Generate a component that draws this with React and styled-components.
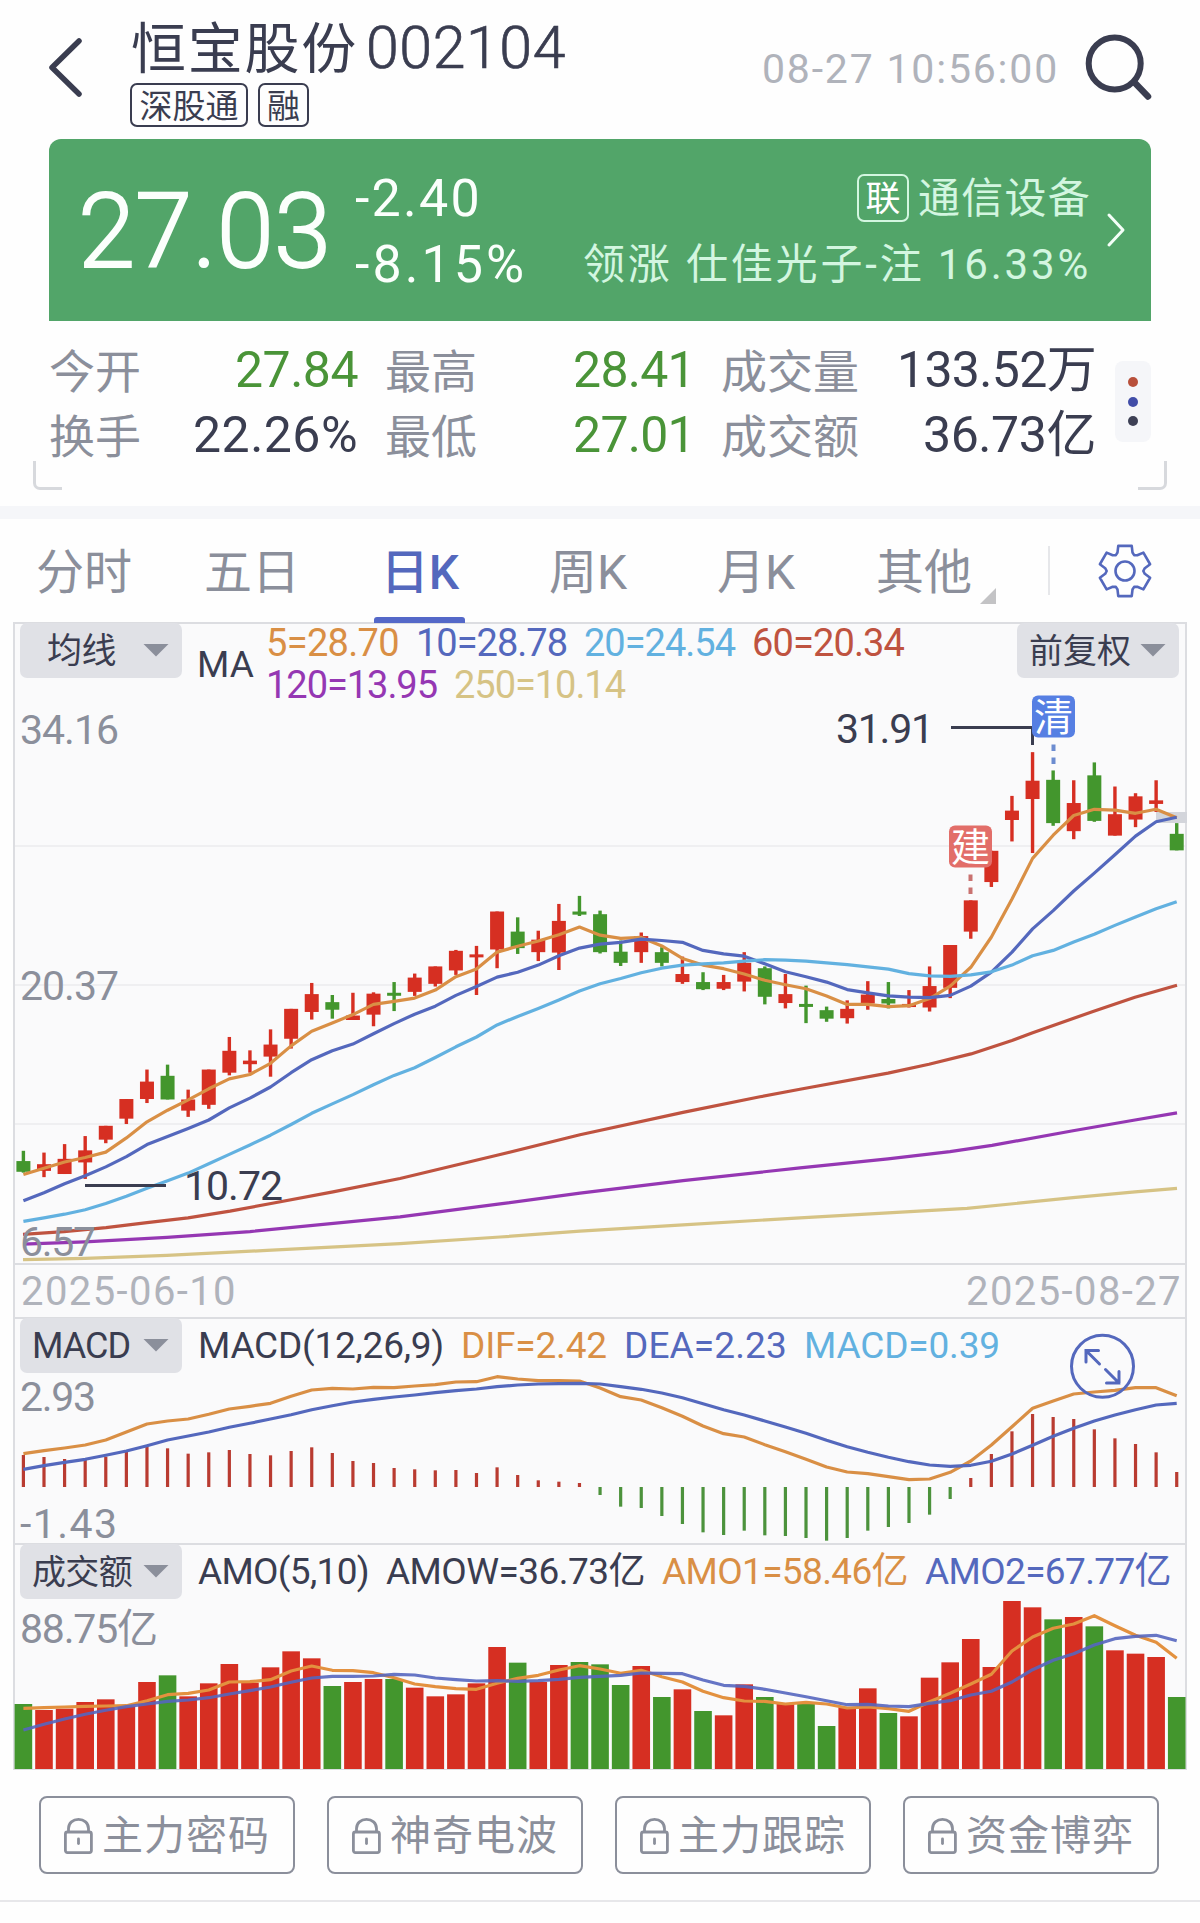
import React, { useLayoutEffect, useRef, useState } from "react";
import styled, { createGlobalStyle } from "styled-components";

const ink = "#3a3d50";
const muted = "#8b8f9b";
const faint = "#b0b3bb";
const blue = "#5468bd";
const orange = "#d98f45";
const sky = "#62b1e0";
const rust = "#bf5340";
const purple = "#9537b3";
const sand = "#d6c385";
const up = "#d62f22";
const down = "#43962d";
const hairline = "#dcdde1";
const family = `Roboto, "Noto Sans CJK SC", sans-serif`;

const Global = createGlobalStyle`
  * { box-sizing: border-box; }
  body { margin: 0; background: #fefefe; }
`;

const Page = styled.main`
  width: 1200px;
  height: 1923px;
  overflow: hidden;
  font-family: ${family};
  font-weight: 400;
  color: ${ink};
  background: #fefefe;
  display: flex;
  flex-direction: column;
`;

/* ---------- text spread over a known width ---------- */
const FitBox = styled.span`
  display: inline-block;
  flex: none;
  white-space: nowrap;
  width: ${(p) => p.$w}px;
  font-size: ${(p) => p.$size}px;
  line-height: ${(p) => p.$lh || p.$size * 1.2}px;
  color: ${(p) => p.$color || "inherit"};
  font-weight: ${(p) => (p.$slim ? 300 : "inherit")};
  -webkit-text-stroke: ${(p) => p.$slim || 0}px;
`;

function Fit({ w, size, lh, color, slim, children }) {
  const ref = useRef(null);
  const [spacing, setSpacing] = useState(0);
  useLayoutEffect(() => {
    const natural = ref.current.getBoundingClientRect().width;
    setSpacing((w - natural) / children.length);
  }, [w, children]);
  return (
    <FitBox $w={w} $size={size} $lh={lh} $color={color} $slim={slim}>
      <span ref={ref} style={{ letterSpacing: spacing }}>{children}</span>
    </FitBox>
  );
}

/* ---------- header ---------- */
const Header = styled.header`
  height: 139px;
  flex: none;
  display: flex;
  align-items: flex-start;
  padding-left: 47px;
`;
const BackIcon = styled.svg`
  width: 38px;
  height: 64px;
  margin-top: 35px;
`;
const TitleBlock = styled.div`
  margin: 12px 0 0 45px;
  width: 632px;
`;
const TitleRow = styled.div`
  display: flex;
  height: 71px;
  gap: 8px;
  padding-left: 1px;
`;
const Tags = styled.div`
  display: flex;
  gap: 10px;
`;
const Tag = styled.span`
  height: 44px;
  width: ${(p) => p.$w}px;
  border: 2px solid ${ink};
  border-radius: 7px;
  font-size: 33px;
  line-height: 43px;
  text-align: center;
`;
const Clock = styled.div`
  margin-top: 45px;
  height: 48px;
`;
const SearchIcon = styled.svg`
  width: 72px;
  height: 72px;
  margin: 31px 0 0 24px;
`;

/* ---------- quote card ---------- */
const Card = styled.section`
  height: 182px;
  flex: none;
  margin: 0 49px;
  border-radius: 12px 12px 0 0;
  background: #52a569;
  color: #fbfffc;
  display: flex;
`;
const Price = styled.div`
  margin: 31px 0 0 29px;
`;
const Change = styled.div`
  margin: 27px 0 0 24px;
  width: 180px;
  display: flex;
  flex-direction: column;
`;
const Sector = styled.div`
  flex: 1;
  margin: 27px 15px 0 0;
  display: flex;
  flex-direction: column;
  align-items: flex-end;
  color: #d3f6e0;
`;
const SectorRow = styled.div`
  display: flex;
  height: 66px;
  align-items: center;
  gap: 9px;
`;
const LinkTag = styled.span`
  width: 52px;
  height: 48px;
  margin-top: -2px;
  border: 2px solid #d3f6e0;
  border-radius: 7px;
  font-size: 35px;
  line-height: 47px;
  text-align: center;
  color: #fff;
`;
const CardArrow = styled.svg`
  width: 20px;
  height: 38px;
  margin: 72px 25px 0 0;
`;

/* ---------- statistics ---------- */
const Stats = styled.section`
  display: grid;
  flex: none;
  grid-template-columns: 336px 336px 394px 36px;
  margin: 17px 49px 0;
  height: 130px;
`;
const StatColumn = styled.div`
  padding-right: ${(p) => p.$gap}px;
`;
const StatRow = styled.div`
  height: 65px;
  display: flex;
  align-items: center;
  justify-content: space-between;
`;
const StatLabel = styled.span`
  font-size: 46px;
  line-height: 61px;
  padding-top: 4px;
  color: ${muted};
`;
const More = styled.div`
  height: 81px;
  margin-top: 23px;
  border-radius: 8px;
  background: #f5f6f9;
  display: flex;
  flex-direction: column;
  align-items: center;
  justify-content: center;
  gap: 9.5px;
`;
const Dot = styled.i`
  width: 10px;
  height: 10px;
  border-radius: 50%;
  background: ${(p) => p.$c};
`;
const Corners = styled.div`
  display: flex;
  flex: none;
  justify-content: space-between;
  margin: -7px 33px 16px;
  height: 29px;
`;
const Corner = styled.i`
  width: 29px;
  height: 29px;
  border-bottom: 3px solid #d7d9dd;
  ${(p) => (p.$right ? "border-right" : "border-left")}: 3px solid #d7d9dd;
  border-radius: ${(p) => (p.$right ? "0 0 7px 0" : "0 0 0 7px")};
`;
const Band = styled.div`
  height: 13px;
  flex: none;
  background: #f5f6f9;
`;

/* ---------- tabs ---------- */
const Tabs = styled.nav`
  height: 104px;
  flex: none;
  display: flex;
`;
const Tab = styled.div`
  position: relative;
  width: 168px;
  text-align: center;
  font-size: 48px;
  line-height: 108px;
  height: 104px;
  font-weight: ${(p) => (p.$on ? 500 : "inherit")};
  color: ${(p) => (p.$on ? blue : muted)};
  &::after {
    content: "";
    display: ${(p) => (p.$on ? "block" : "none")};
    position: absolute;
    left: 38px;
    bottom: 0;
    width: 91px;
    height: 6px;
    border-radius: 3px 3px 0 0;
    background: #5468c8;
  }
`;
const Notch = styled.i`
  position: absolute;
  left: 140px;
  top: 69px;
  width: 16px;
  height: 16px;
  background: #c3c3c5;
  clip-path: polygon(100% 0, 100% 100%, 0 100%);
`;
const Divider = styled.i`
  width: 2px;
  height: 49px;
  margin: 27px 0 0 40px;
  background: #e6e7ea;
`;
const GearIcon = styled.svg`
  width: 60px;
  height: 60px;
  margin: 22px 0 0 45px;
`;

/* ---------- chart panels ---------- */
const Panel = styled.section`
  display: grid;
  flex: none;
  width: 1174px;
  height: ${(p) => p.$h}px;
  margin-left: 13px;
  > * { grid-area: 1 / 1; }
`;
const Plot = styled.svg`
  display: block;
  overflow: visible;
  width: 1174px;
  height: ${(p) => p.$h}px;
  font-family: ${family};
`;
const PanelHead = styled.div`
  display: flex;
  align-items: flex-start;
  padding-left: 7px;
  height: 60px;
  z-index: 1;
`;
const Select = styled.div`
  display: flex;
  flex: none;
  align-items: center;
  justify-content: space-between;
  width: 162px;
  height: 55px;
  padding: 2px 13px 0 ${(p) => p.$pad}px;
  border-radius: 7px;
  background: #e0e1e6;
`;
const Caret = styled.i`
  width: 26px;
  height: 13px;
  margin-top: -3px;
  background: ${muted};
  clip-path: polygon(0 0, 100% 0, 50% 100%);
`;
const Legend = styled.div`
  display: flex;
  margin: ${(p) => p.$m};
  gap: ${(p) => p.$gap}px;
`;
const MaLegend = styled.div`
  width: 763px;
  padding: 0 0 0 12px;
`;
const MaLine = styled.div`
  display: flex;
  gap: 17px;
  height: 42px;
`;
const DateRow = styled.div`
  flex: none;
  height: 55px;
  width: 1174px;
  margin-left: 13px;
  padding: 1px 3px 0 6px;
  display: flex;
  justify-content: space-between;
  border: solid ${hairline};
  border-width: 2px 2px 0;
  background: #fafafb;
`;

/* ---------- locked features ---------- */
const Actions = styled.footer`
  display: flex;
  flex: none;
  justify-content: space-between;
  height: 132px;
  padding: 26px 41px 0 39px;
  border-bottom: 2px solid #e7e7ea;
`;
const Action = styled.button`
  display: flex;
  align-items: center;
  width: 256px;
  height: 78px;
  padding: 2px 0 0 22px;
  gap: 8px;
  border: 2px solid ${muted};
  border-radius: 8px;
  background: transparent;
  color: ${muted};
  font-family: ${family};
  font-weight: inherit;
`;
const LockIcon = styled.svg`
  width: 31px;
  height: 38px;
`;

/* ---------- data ---------- */
const X0 = 23.4;
const STEP = 20.595;
const cx = (i) => X0 + i * STEP;
const ky = (v) => 620 + v / 2.24;
const my = (v) => 1300 + v / 3;
const ay = (v) => 1560 + v / 3;
const nums = (s) => s.trim().split(/\s+/).map(Number);
const path = (values, y) =>
  values.map((v, i) => `${cx(i).toFixed(1)},${y(v).toFixed(1)}`).join(" ");
const sparse = (pts) => pts.map(([x, v]) => `${x},${ky(v).toFixed(1)}`).join(" ");

const colours =
  "GRRRRRRGRRRRRRRGRRGRRRRRGRRGGGRGRGRRGRGGRRGRRRRRRRGRGRRRG";
// body top, body bottom, high, low
const candles = `1212 1236 1189 1238|1219 1234 1193 1248|1207 1241 1174 1241|1188 1215 1156 1252|1133 1164 1133 1172|1073 1117 1073 1129|1034 1073 1007 1082|1021 1074 996 1074|1074 1099 1052 1113|1007 1086 1007 1095|965 1014 934 1020|987 995 964 1014|951 978 917 1023|871 938 871 960|838 878 813 895|856 873 840 893|886 896 835 896|837 884 834 910|835 841 811 876|801 833 792 842|776 815 776 821|741 785 739 795|749 755 730 840|653 738 653 780|698 735 666 748|716 744 696 764|674 745 636 784|653 660 618 663|659 744 651 747|743 768 718 775|708 744 700 768|744 768 733 776|793 811 754 815|811 827 789 829|811 826 795 829|768 810 744 832|780 844 776 861|838 858 793 870|860 866 819 903|874 893 866 900|871 892 852 904|839 859 809 873|849 859 811 870|860 867 829 868|820 868 776 877|728 824 728 847|628 698 628 714|517 587 517 598|427 448 394 496|360 401 296 522|358 455 337 461|410 473 359 491|348 450 319 452|435 483 373 483|395 447 388 464|404 412 359 430|479 516 455 516`
  .split("|")
  .map(nums);

const ma5 = nums(`1242 1228 1214 1204 1192 1160 1124 1098 1075 1050 1028 1018 993 954 921 903 884 861 854 847 829 799 782 744 731 719 705 688 706 713 711 730 758 773 781 793 807 817 826 842 861 861 866 864 848 820 778 710 625 534 482 438 424 426 433 424 443`);
const ma10 = nums(`1301 1283 1263 1245 1225 1202 1175 1157 1139 1120 1093 1071 1046 1014 985 965 950 927 904 883 865 841 821 800 789 773 752 735 726 722 715 718 722 740 748 753 770 788 799 811 828 835 842 845 846 841 820 789 744 692 651 607 567 526 484 452 442`);
const ma20 = nums(`1347 1339 1331 1321 1307 1291 1273 1256 1239 1218 1197 1176 1154 1130 1105 1084 1063 1041 1020 1003 980 956 934 907 888 870 851 831 815 803 790 780 773 770 768 764 761 762 764 768 772 777 782 792 797 798 795 788 773 752 740 721 704 684 665 647 631`);
const ma60 = [[23, 1376], [64, 1370], [106, 1361], [147, 1350], [188, 1339], [230, 1324], [271, 1307], [333, 1281], [400, 1251], [497, 1199], [580, 1153], [683, 1103], [760, 1068], [800, 1051], [888, 1015], [929, 995], [971, 972], [1012, 942], [1032, 925], [1093, 877], [1135, 845], [1177, 818]];
const ma120 = [[23, 1398], [85, 1393], [167, 1383], [250, 1370], [400, 1337], [500, 1308], [580, 1284], [683, 1256], [800, 1227], [888, 1207], [950, 1191], [992, 1177], [1073, 1144], [1135, 1120], [1177, 1104]];
const ma250 = [[23, 1433], [85, 1430], [167, 1423], [267, 1412], [400, 1397], [500, 1382], [580, 1369], [683, 1355], [800, 1339], [888, 1328], [967, 1318], [1073, 1294], [1135, 1281], [1177, 1273]];

const macdBars = nums(`465 471 477 480 470 455 440 445 461 457 450 462 466 453 442 459 483 489 504 508 511 510 519 502 525 541 545 549 585 620 624 648 672 697 705 692 706 708 714 722 714 692 681 669 644 597 534 462 394 342 351 357 388 415 432 457 516`);
const dif = nums(`461 452 444 435 420 396 372 363 357 343 327 319 310 289 270 265 267 262 263 258 254 246 245 230 237 242 242 243 264 290 300 323 349 378 401 411 434 455 478 501 516 521 530 539 537 517 483 435 380 325 303 282 276 271 263 263 287`);
const dea = nums(`508 497 487 478 466 453 437 420 408 396 382 370 357 344 329 317 306 298 291 285 278 272 267 260 255 252 251 250 252 260 268 279 293 311 329 345 363 381 400 421 440 457 472 485 495 499 496 484 462 436 409 385 363 345 329 315 310`);

const amoBars = nums(`432 450 446 426 418 439 366 346 409 370 312 368 322 274 295 378 366 357 357 383 409 403 370 261 308 366 315 306 313 375 318 411 388 453 466 373 411 432 428 498 442 385 459 469 353 307 237 321 123 142 178 171 199 271 281 291 411`);
const amo1 = nums(`445 443 441 439 438 437 422 404 400 390 366 365 359 333 318 331 332 338 353 372 380 386 388 370 355 346 330 317 327 340 331 350 366 394 413 423 424 432 427 432 444 441 446 454 425 400 372 343 273 231 205 192 167 197 226 247 295`);
const amo2 = nums(`510 493 477 463 451 440 432 424 420 413 402 392 381 367 354 349 349 348 343 345 354 359 363 362 364 362 358 352 349 346 339 340 341 360 376 379 388 399 410 422 434 433 438 440 430 422 405 394 366 329 301 281 255 236 229 226 242`);

/* ---------- drawing pieces ---------- */
const Line = ({ points, color, width = 3.2 }) => (
  <polyline points={points} fill="none" stroke={color} strokeWidth={width} strokeLinejoin="round" />
);
const Label = ({ x, y, w, color = muted, children }) => (
  <text x={x} y={y} fontSize="41" fill={color} textLength={w}>{children}</text>
);
const Frame = ({ y, h }) => (
  <>
    <rect x="13" y={y} width="1174" height={h} fill="#fafafb" />
    <path d={`M14 ${y}V${y + h}M1186 ${y}V${y + h}`} stroke={hairline} strokeWidth="2" />
    <path d={`M13 ${y + 1}H1187`} stroke={hairline} strokeWidth="2" />
  </>
);
const Marker = ({ x, y, fill, dash, children }) => (
  <g>
    <rect x={x} y={y} width="43" height="42" rx="6" fill={fill} />
    <text x={x + 21.5} y={y + 35.5} fontSize="39" fill="#fff" textAnchor="middle">{children}</text>
    <path d={`M${x + 21.5} ${y + 49}v6.5m0 6.5v6.5`} stroke={dash} strokeWidth="4" />
  </g>
);

function gearPath() {
  const pts = [];
  for (let k = 0; k < 6; k++) {
    [[-22, 20], [-15, 26], [15, 26], [22, 20], [30, 18.3]].forEach(([d, r]) => {
      const a = ((-90 + 60 * k + d) * Math.PI) / 180;
      pts.push(`${(30 + r * Math.cos(a)).toFixed(2)} ${(30 + r * Math.sin(a)).toFixed(2)}`);
    });
  }
  return `M${pts.join("L")}Z`;
}

function PricePanel() {
  return (
    <Panel $h={640}>
      <Plot $h={640} viewBox="13 623 1174 640">
        <Frame y={622} h={641} />
        <path d="M15 846H1185M15 985H1185M15 1124H1185" stroke="#efeff1" strokeWidth="2" />
        <rect x="1156" y="812" width="31" height="11" fill="#d3d5db" />
        <Label x={20} y={744} w={99}>34.16</Label>
        <Label x={20} y={1000} w={99}>20.37</Label>
        {candles.map(([t, b, h, l], i) => {
          const fill = colours[i] === "G" ? down : up;
          return (
            <g key={i} fill={fill}>
              <rect x={cx(i) - 1.7} y={ky(h)} width="3.4" height={ky(l) - ky(h)} />
              <rect x={cx(i) - 7} y={ky(t)} width="14" height={Math.max(3, ky(b) - ky(t))} />
            </g>
          );
        })}
        <Line points={path(ma5, ky)} color={orange} />
        <Line points={path(ma10, ky)} color={blue} />
        <Line points={path(ma20, ky)} color={sky} />
        <Line points={sparse(ma60)} color={rust} />
        <Line points={sparse(ma120)} color={purple} />
        <Line points={sparse(ma250)} color={sand} />
        <Label x={20} y={1256} w={76}>6.57</Label>
        <path d="M85 1185.5H166" stroke={ink} strokeWidth="3" />
        <Label x={184} y={1200} w={99} color={ink}>10.72</Label>
        <Label x={836} y={743} w={98} color={ink}>31.91</Label>
        <path d="M951 727.5H1032.5V745" stroke={ink} strokeWidth="3" fill="none" />
        <Marker x={1032} y={695.5} fill="#567fe3" dash="#6c8cd0">清</Marker>
        <Marker x={949} y={825.5} fill="#e26e69" dash="#c97270">建</Marker>
      </Plot>
      <PanelHead>
        <Select $pad={27}><Fit w={69} size={35}>均线</Fit><Caret /></Select>
        <Legend $m="20px 0 0 15px" $gap={0}><Fit w={57} size={37} lh={44}>MA</Fit></Legend>
        <MaLegend>
          <MaLine>
            <Fit w={133} size={38} lh={40} color={orange}>5=28.70</Fit>
            <Fit w={151} size={38} lh={40} color={blue}>10=28.78</Fit>
            <Fit w={151} size={38} lh={40} color={sky}>20=24.54</Fit>
            <Fit w={152} size={38} lh={40} color={rust}>60=20.34</Fit>
          </MaLine>
          <MaLine>
            <Fit w={171} size={38} lh={40} color={purple}>120=13.95</Fit>
            <Fit w={171} size={38} lh={40} color={sand}>250=10.14</Fit>
          </MaLine>
        </MaLegend>
        <Select $pad={12}><Fit w={102} size={34}>前复权</Fit><Caret /></Select>
      </PanelHead>
    </Panel>
  );
}

function MacdPanel() {
  return (
    <Panel $h={226}>
      <Plot $h={226} viewBox="13 1318 1174 226">
        <Frame y={1317} h={227} />
        <Label x={20} y={1411} w={76}>2.93</Label>
        <Label x={20} y={1537.5} w={97}>-1.43</Label>
        {macdBars.map((v, i) => (
          <rect
            key={i}
            x={cx(i) - 1.6}
            width="3.2"
            y={Math.min(my(v), 1487)}
            height={Math.abs(my(v) - 1487)}
            fill={v > 561 ? "#4c923c" : "#b93b31"}
          />
        ))}
        <Line points={path(dif, my)} color={orange} />
        <Line points={path(dea, my)} color={blue} />
        <g fill="none" stroke={blue} strokeWidth="3" strokeLinecap="round">
          <circle cx="1102.5" cy="1366.3" r="31" />
          <path d="M1086 1362V1350.5H1098.5M1086 1350.5L1099.5 1364M1119 1371.5V1383H1106.5M1119 1383L1105.5 1369.5" />
        </g>
      </Plot>
      <PanelHead>
        <Select $pad={12}><Fit w={98} size={36}>MACD</Fit><Caret /></Select>
        <Legend $m="6px 0 0 16px" $gap={17}>
          <Fit w={246} size={37} lh={44}>MACD(12,26,9)</Fit>
          <Fit w={146} size={37} lh={44} color={orange}>DIF=2.42</Fit>
          <Fit w={163} size={37} lh={44} color={blue}>DEA=2.23</Fit>
          <Fit w={196} size={37} lh={44} color={sky}>MACD=0.39</Fit>
        </Legend>
      </PanelHead>
    </Panel>
  );
}

function AmoPanel() {
  return (
    <Panel $h={226}>
      <Plot $h={226} viewBox="13 1544 1174 226">
        <Frame y={1543} h={227} />
        <Label x={20} y={1643} w={138}>88.75亿</Label>
        {amoBars.map((v, i) => (
          <rect key={i} x={cx(i) - 8.8} width="17.6" y={ay(v)} height={1769 - ay(v)} fill={colours[i] === "G" ? down : up} />
        ))}
        <Line points={path(amo1, ay)} color="#e3913f" />
        <g opacity="0.9"><Line points={path(amo2, ay)} color="#5566bf" /></g>
        <path d="M13 1769.5H1187" stroke={hairline} strokeWidth="1" />
      </Plot>
      <PanelHead>
        <Select $pad={12}><Fit w={100} size={34}>成交额</Fit><Caret /></Select>
        <Legend $m="6px 0 0 16px" $gap={17}>
          <Fit w={171} size={37} lh={44}>AMO(5,10)</Fit>
          <Fit w={259} size={37} lh={44}>AMOW=36.73亿</Fit>
          <Fit w={246} size={37} lh={44} color={orange}>AMO1=58.46亿</Fit>
          <Fit w={246} size={37} lh={44} color={blue}>AMO2=67.77亿</Fit>
        </Legend>
      </PanelHead>
    </Panel>
  );
}

const Stat = ({ label, value, w, color }) => (
  <StatRow>
    <StatLabel>{label}</StatLabel>
    <Fit w={w} size={50} lh={65} color={color}>{value}</Fit>
  </StatRow>
);

export default function App() {
  return (
    <Page>
      <Global />
      <Header>
        <BackIcon viewBox="0 0 38 64" fill="none" stroke={ink} strokeWidth="5.5" strokeLinecap="round" strokeLinejoin="round">
          <path d="M32 6L5 32.5L32 59" />
        </BackIcon>
        <TitleBlock>
          <TitleRow>
            <Fit w={227} size={55} lh={74}>恒宝股份</Fit>
            <Fit w={200} size={59} lh={72} slim={0.7}>002104</Fit>
          </TitleRow>
          <Tags>
            <Tag $w={118}>深股通</Tag>
            <Tag $w={51}>融</Tag>
          </Tags>
        </TitleBlock>
        <Clock><Fit w={297} size={41} lh={48} color={faint}>08-27 10:56:00</Fit></Clock>
        <SearchIcon viewBox="1083 31 72 72" fill="none" stroke={ink} strokeLinecap="round">
          <circle cx="1114.7" cy="63.5" r="26" strokeWidth="6" />
          <path d="M1135 83L1148 96.5" strokeWidth="6.5" />
        </SearchIcon>
      </Header>

      <Card>
        <Price><Fit w={253} size={103} lh={124} slim={1.8}>27.03</Fit></Price>
        <Change>
          <Fit w={127} size={52} lh={66}>-2.40</Fit>
          <Fit w={172} size={52} lh={66}>-8.15%</Fit>
        </Change>
        <Sector>
          <SectorRow><LinkTag>联</LinkTag><Fit w={173} size={42} lh={62}>通信设备</Fit></SectorRow>
          <SectorRow><Fit w={508} size={42} lh={62}>领涨 仕佳光子-注 16.33%</Fit></SectorRow>
        </Sector>
        <CardArrow viewBox="0 0 20 38" fill="none" stroke="#f4fff8" strokeWidth="3" strokeLinecap="round" strokeLinejoin="round">
          <path d="M3 4L17 19L3 34" />
        </CardArrow>
      </Card>

      <Stats>
        <StatColumn $gap={27}>
          <Stat label="今开" value="27.84" w={123} color="#4a9438" />
          <Stat label="换手" value="22.26%" w={165} />
        </StatColumn>
        <StatColumn $gap={26}>
          <Stat label="最高" value="28.41" w={122} color="#4a9438" />
          <Stat label="最低" value="27.01" w={122} color="#4a9438" />
        </StatColumn>
        <StatColumn $gap={19}>
          <Stat label="成交量" value="133.52万" w={199} />
          <Stat label="成交额" value="36.73亿" w={173} />
        </StatColumn>
        <More>
          <Dot $c="#b8503b" />
          <Dot $c="#414da8" />
          <Dot $c="#3d4055" />
        </More>
      </Stats>
      <Corners><Corner /><Corner $right /></Corners>
      <Band />

      <Tabs>
        <Tab>分时</Tab>
        <Tab>五日</Tab>
        <Tab $on>日K</Tab>
        <Tab>周K</Tab>
        <Tab>月K</Tab>
        <Tab>其他<Notch /></Tab>
        <Divider />
        <GearIcon viewBox="0 0 60 60" fill="none" stroke={blue} strokeWidth="2.6" strokeLinejoin="round">
          <path d={gearPath()} />
          <circle cx="30" cy="30" r="9.5" />
        </GearIcon>
      </Tabs>

      <PricePanel />
      <DateRow>
        <Fit w={216} size={40} lh={52} color={faint}>2025-06-10</Fit>
        <Fit w={216} size={40} lh={52} color={faint}>2025-08-27</Fit>
      </DateRow>
      <MacdPanel />
      <AmoPanel />

      <Actions>
        {["主力密码", "神奇电波", "主力跟踪", "资金博弈"].map((name) => (
          <Action key={name}>
            <LockIcon viewBox="0 0 31 38" fill="none" stroke={muted} strokeWidth="2.8">
              <rect x="2.4" y="15" width="26" height="20.6" rx="2" />
              <path d="M5.5 15V11.5C5.5 6 10 2.4 15.5 2.4S25.5 6 25.5 11.5V15" />
              <path d="M15.5 22v4.5" strokeLinecap="round" />
            </LockIcon>
            <Fit w={168} size={41} lh={62}>{name}</Fit>
          </Action>
        ))}
      </Actions>
    </Page>
  );
}
